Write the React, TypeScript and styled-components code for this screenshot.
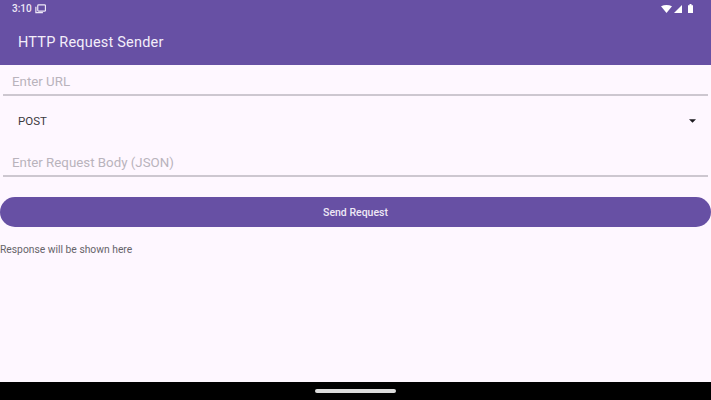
import styled, { createGlobalStyle } from "styled-components";

const GlobalStyle = createGlobalStyle`
  html, body {
    margin: 0;
    padding: 0;
    background: #fef7ff;
  }
  * {
    box-sizing: border-box;
  }
`;

const Screen = styled.div`
  width: 711px;
  height: 400px;
  display: flex;
  flex-direction: column;
  overflow: hidden;
  font-family: Roboto, "Liberation Sans", sans-serif;
  background: #fef7ff;
`;

const Header = styled.header`
  height: 65px;
  flex: none;
  background: #6750a4;
  color: #fff;
`;

const StatusBar = styled.div`
  height: 17px;
  padding: 0 16px 0 12px;
  display: flex;
  align-items: center;
  justify-content: space-between;
  color: #eee8f6;
`;

const Clock = styled.div`
  display: flex;
  align-items: center;
  gap: 3px;
  font-size: 10px;
  font-weight: 500;
`;

const StatusIcons = styled.div`
  display: flex;
  align-items: center;
  gap: 2px;
`;

const AppTitle = styled.h1`
  margin: 0;
  padding: 16px 18px 0;
  font-size: 14.5px;
  line-height: 20px;
  font-weight: 400;
  letter-spacing: 0.2px;
  color: #f3eefa;
`;

const Main = styled.main`
  flex: 1;
  display: flex;
  flex-direction: column;
`;

const Field = styled.div`
  height: 31px;
  margin: 0 3px;
  padding: 8px 9px 0;
  border-bottom: 2px solid #cdc7d0;
  font-size: 13.3px;
  line-height: 18px;
  color: #b9b3bc;
`;

const SelectRow = styled.div`
  height: 50px;
  padding: 0 15px 0 18px;
  display: flex;
  align-items: center;
  justify-content: space-between;
  font-size: 11.5px;
  color: #3c3a40;
`;

const SendButton = styled.button`
  height: 30px;
  width: 100%;
  margin-top: 20px;
  border: 0;
  border-radius: 15px;
  background: #6750a4;
  color: #eee8f6;
  font-family: inherit;
  font-size: 10.5px;
  font-weight: 500;
`;

const ResponseText = styled.p`
  margin: 16px 0 0;
  font-size: 10.3px;
  line-height: 13px;
  color: #66646a;
`;

const NavBar = styled.footer`
  height: 18px;
  flex: none;
  background: #000;
  display: flex;
  justify-content: center;
  padding-top: 7px;
`;

const HomeHandle = styled.div`
  width: 81px;
  height: 4px;
  border-radius: 2px;
  background: #dcdcdc;
`;

export default function App() {
  return (
    <Screen>
      <GlobalStyle />
      <Header>
        <StatusBar>
          <Clock>
            3:10
            <svg width="11" height="10" viewBox="0 0 10 9" fill="none" stroke="#eee8f6" strokeWidth="1.1">
              <rect x="2.5" y="0.8" width="7" height="5.7" rx="0.8" />
              <path d="M0.8 2.5v5.2h6.4" />
            </svg>
          </Clock>
          <StatusIcons>
            <svg width="11" height="8" viewBox="0 0 11 8">
              <path d="M0 1.2Q5.5-1.2 11 1.2L5.5 8Z" fill="#fff" />
            </svg>
            <svg width="8" height="8" viewBox="0 0 8 8">
              <path d="M8 0V8H0Z" fill="#fff" />
            </svg>
            <svg width="8" height="9" viewBox="0 0 8 9" style={{ marginLeft: 3 }}>
              <path d="M1 1.2h1.5V0h2v1.2H6V9H1Z" fill="#fff" />
            </svg>
          </StatusIcons>
        </StatusBar>
        <AppTitle>HTTP Request Sender</AppTitle>
      </Header>
      <Main>
        <Field>Enter URL</Field>
        <SelectRow>
          POST
          <svg width="7" height="4" viewBox="0 0 8 4">
            <path d="M0 0H8L4 4Z" fill="#1d1b20" />
          </svg>
        </SelectRow>
        <Field>Enter Request Body (JSON)</Field>
        <SendButton>Send Request</SendButton>
        <ResponseText>Response will be shown here</ResponseText>
      </Main>
      <NavBar>
        <HomeHandle />
      </NavBar>
    </Screen>
  );
}
